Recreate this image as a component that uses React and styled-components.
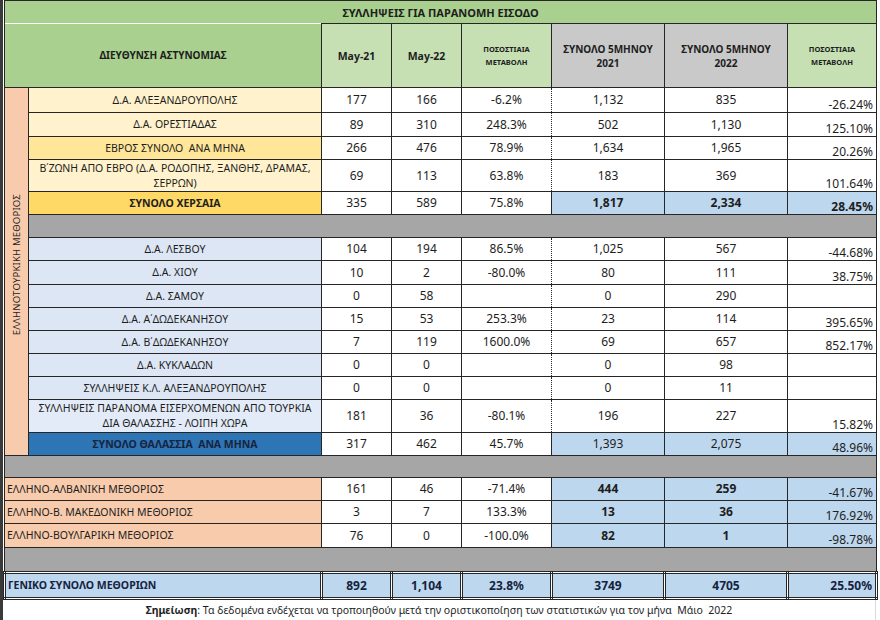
import React from "react";
import styled, { createGlobalStyle } from "styled-components";

const GlobalStyle = createGlobalStyle`
  html, body {
    margin: 0;
    background: #ffffff;
  }
  body {
    font-family: "Noto Sans", "Open Sans", sans-serif;
    color: #1e1e1e;
  }
`;

const Page = styled.div`
  width: 877px;
  height: 620px;
  border-left: 3px solid #3a3a3a;
  display: flex;
  flex-direction: column;
  overflow: hidden;
`;

const Sheet = styled.table`
  width: 872px;
  border-collapse: collapse;
  table-layout: fixed;
  & td {
    border: 1px solid #262626;
    padding: 0;
    overflow: hidden;
  }
`;

const Row = styled.tr`
  height: ${p => p.$h}px;
`;

const Title = styled.td`
  && {
    border-bottom: none;
  }
  background: #a9d08e;
  text-align: center;
  font-weight: 700;
  font-size: 11px;
`;

const Head = styled.td`
  background: ${p => p.$bg};
  text-align: center;
  font-weight: 700;
  font-size: ${p => p.$size || 10}px;
  line-height: ${p => p.$lh || 14}px;
  &&& {
    ${p => p.$open && "border-top: none;"}
  }
`;

const Side = styled.td`
  background: #f8cbad;
`;

const SideLabel = styled.div`
  writing-mode: vertical-rl;
  transform: rotate(180deg);
  margin: 0 auto;
  font-size: 9.5px;
  letter-spacing: 0.2px;
  white-space: nowrap;
  padding-top: 14px;
`;

const Name = styled.td`
  background: ${p => p.$bg};
  color: ${p => p.$color || "#1e1e1e"};
  text-align: ${p => (p.$left ? "left" : "center")};
  padding-left: ${p => (p.$left ? 2 : 0)}px !important;
  font-weight: ${p => (p.$bold ? 700 : 400)};
  font-size: 10.5px;
  line-height: 15px;
  white-space: pre-wrap;
`;

const Num = styled.td`
  background: ${p => (p.$blue ? "#bdd7ee" : "#ffffff")};
  text-align: center;
  font-size: 12px;
  font-weight: ${p => (p.$bold ? 700 : 400)};
  line-height: 14px;
  &&& {
    ${p => p.$dotRight && "border-right: 1px dotted #262626;"}
    ${p => p.$dotLeft && "border-left: 1px dotted #262626;"}
  }
`;

const Pct = styled.td`
  background: ${p => (p.$blue ? "#bdd7ee" : "#ffffff")};
  text-align: right;
  vertical-align: ${p => (p.$middle ? "middle" : "bottom")};
  padding-right: 3px !important;
  font-size: 12px;
  line-height: 14px;
  font-weight: ${p => (p.$bold ? 700 : 400)};
`;

const Spacer = styled.td`
  background: #a6a6a6;
`;

const GrandRow = styled.tr`
  height: 26px;
  & td {
    background: #bdd7ee;
    border: 3px double #262626;
    font-weight: 700;
    color: #15233f;
  }
`;

const Note = styled.div`
  height: 22px;
  display: flex;
  align-items: center;
  justify-content: center;
  font-size: 10.5px;
  color: #1e1e1e;
  border-right: 1px solid #d9d9d9;
  width: 872px;
  white-space: pre;
  & b {
    font-weight: 700;
  }
`;

function DataRow({ h, lead, name, bg, bold, color, left, span, v, blue, boldT, boldTp, dotted }) {
  return (
    <Row $h={h}>
      {lead}
      <Name $bg={bg} $bold={bold} $color={color} $left={left} colSpan={span || 1}>
        {name}
      </Name>
      <Num>{v[0]}</Num>
      <Num>{v[1]}</Num>
      <Num $dotRight={dotted}>{v[2]}</Num>
      <Num $dotLeft={dotted} $blue={blue} $bold={boldT}>{v[3]}</Num>
      <Num $blue={blue} $bold={boldT}>{v[4]}</Num>
      <Pct $blue={blue} $bold={boldTp}>{v[5]}</Pct>
    </Row>
  );
}

const LIGHT_Y = "#fff2cc";
const MID_Y = "#ffe699";
const GOLD = "#ffd966";
const SEA = "#dce6f4";
const SEA_TOTAL = "#2e75b6";
const PEACH = "#f8cbad";

const seaRows = [
  { name: "Δ.Α. ΛΕΣΒΟΥ", h: 23, v: ["104", "194", "86.5%", "1,025", "567", "-44.68%"] },
  { name: "Δ.Α. ΧΙΟΥ", h: 24, v: ["10", "2", "-80.0%", "80", "111", "38.75%"] },
  { name: "Δ.Α. ΣΑΜΟΥ", h: 23, v: ["0", "58", "", "0", "290", ""] },
  { name: "Δ.Α. Α΄ΔΩΔΕΚΑΝΗΣΟΥ", h: 23, v: ["15", "53", "253.3%", "23", "114", "395.65%"] },
  { name: "Δ.Α. Β΄ΔΩΔΕΚΑΝΗΣΟΥ", h: 23, v: ["7", "119", "1600.0%", "69", "657", "852.17%"] },
  { name: "Δ.Α. ΚΥΚΛΑΔΩΝ", h: 23, v: ["0", "0", "", "0", "98", ""] },
  { name: "ΣΥΛΛΗΨΕΙΣ Κ.Λ. ΑΛΕΞΑΝΔΡΟΥΠΟΛΗΣ", h: 23, v: ["0", "0", "", "0", "11", ""] },
];

const borderRows = [
  { name: "ΕΛΛΗΝΟ-ΑΛΒΑΝΙΚΗ ΜΕΘΟΡΙΟΣ", h: 23, v: ["161", "46", "-71.4%", "444", "259", "-41.67%"] },
  { name: "ΕΛΛΗΝΟ-Β. ΜΑΚΕΔΟΝΙΚΗ ΜΕΘΟΡΙΟΣ", h: 23, v: ["3", "7", "133.3%", "13", "36", "176.92%"] },
  { name: "ΕΛΛΗΝΟ-ΒΟΥΛΓΑΡΙΚΗ ΜΕΘΟΡΙΟΣ", h: 24, v: ["76", "0", "-100.0%", "82", "1", "-98.78%"] },
];

export default function App() {
  return (
    <>
      <GlobalStyle />
      <Page>
        <Sheet>
          <colgroup>
            <col style={{ width: 24 }} />
            <col style={{ width: 293 }} />
            <col style={{ width: 70 }} />
            <col style={{ width: 70 }} />
            <col style={{ width: 90 }} />
            <col style={{ width: 113 }} />
            <col style={{ width: 123 }} />
            <col style={{ width: 89 }} />
          </colgroup>
          <tbody>
            <Row $h={23}>
              <Title colSpan={8}>ΣΥΛΛΗΨΕΙΣ ΓΙΑ ΠΑΡΑΝΟΜΗ ΕΙΣΟΔΟ</Title>
            </Row>
            <Row $h={64}>
              <Head $bg="#a9d08e" colSpan={2} $open>ΔΙΕΥΘΥΝΣΗ ΑΣΤΥΝΟΜΙΑΣ</Head>
              <Head $bg="#c6e0b4" $size={10.5}>May-21</Head>
              <Head $bg="#c6e0b4" $size={10.5}>May-22</Head>
              <Head $bg="#c6e0b4" $size={7.5} $lh={13}>ΠΟΣΟΣΤΙΑΙΑ<br />ΜΕΤΑΒΟΛΗ</Head>
              <Head $bg="#c9c9c9">ΣΥΝΟΛΟ 5ΜΗΝΟΥ<br />2021</Head>
              <Head $bg="#c9c9c9">ΣΥΝΟΛΟ 5ΜΗΝΟΥ<br />2022</Head>
              <Head $bg="#c6e0b4" $size={7.5} $lh={13}>ΠΟΣΟΣΤΙΑΙΑ<br />ΜΕΤΑΒΟΛΗ</Head>
            </Row>

            <DataRow
              h={25}
              lead={
                <Side rowSpan={15}>
                  <SideLabel>ΕΛΛΗΝΟΤΟΥΡΚΙΚΗ ΜΕΘΟΡΙΟΣ</SideLabel>
                </Side>
              }
              name="Δ.Α. ΑΛΕΞΑΝΔΡΟΥΠΟΛΗΣ"
              bg={LIGHT_Y}
              dotted
              v={["177", "166", "-6.2%", "1,132", "835", "-26.24%"]}
            />
            <DataRow h={24} name="Δ.Α. ΟΡΕΣΤΙΑΔΑΣ" bg={LIGHT_Y} dotted
              v={["89", "310", "248.3%", "502", "1,130", "125.10%"]} />
            <DataRow h={23} name="ΕΒΡΟΣ ΣΥΝΟΛΟ  ΑΝΑ ΜΗΝΑ" bg={MID_Y} dotted
              v={["266", "476", "78.9%", "1,634", "1,965", "20.26%"]} />
            <DataRow h={32}
              name={<>Β΄ΖΩΝΗ ΑΠΟ ΕΒΡΟ (Δ.Α. ΡΟΔΟΠΗΣ, ΞΑΝΘΗΣ, ΔΡΑΜΑΣ,<br />ΣΕΡΡΩΝ)</>}
              bg={LIGHT_Y} dotted
              v={["69", "113", "63.8%", "183", "369", "101.64%"]} />
            <DataRow h={23} name="ΣΥΝΟΛΟ ΧΕΡΣΑΙΑ" bg={GOLD} bold blue boldT boldTp
              v={["335", "589", "75.8%", "1,817", "2,334", "28.45%"]} />

            <Row $h={23}>
              <Spacer colSpan={7} />
            </Row>

            {seaRows.map(r => (
              <DataRow key={r.name} h={r.h} name={r.name} bg={SEA} dotted v={r.v} />
            ))}
            <DataRow h={33}
              name={<>ΣΥΛΛΗΨΕΙΣ ΠΑΡΑΝΟΜΑ ΕΙΣΕΡΧΟΜΕΝΩΝ ΑΠΟ ΤΟΥΡΚΙΑ<br />ΔΙΑ ΘΑΛΑΣΣΗΣ - ΛΟΙΠΗ ΧΩΡΑ</>}
              bg="#e2ebf7" dotted
              v={["181", "36", "-80.1%", "196", "227", "15.82%"]} />
            <DataRow h={23} name="ΣΥΝΟΛΟ ΘΑΛΑΣΣΙΑ  ΑΝΑ ΜΗΝΑ" bg={SEA_TOTAL} color="#172440" bold blue
              v={["317", "462", "45.7%", "1,393", "2,075", "48.96%"]} />

            <Row $h={22}>
              <Spacer colSpan={8} />
            </Row>

            {borderRows.map(r => (
              <DataRow key={r.name} h={r.h} name={r.name} bg={PEACH} left span={2} blue boldT v={r.v} />
            ))}

            <Row $h={25}>
              <Spacer colSpan={8} />
            </Row>

            <GrandRow>
              <Name $bg="#bdd7ee" $left $bold colSpan={2}>ΓΕΝΙΚΟ ΣΥΝΟΛΟ ΜΕΘΟΡΙΩΝ</Name>
              <Num>892</Num>
              <Num>1,104</Num>
              <Num>23.8%</Num>
              <Num>3749</Num>
              <Num>4705</Num>
              <Pct $middle>25.50%</Pct>
            </GrandRow>
          </tbody>
        </Sheet>
        <Note>
          <b>Σημείωση</b>: Τα δεδομένα ενδέχεται να τροποιηθούν μετά την οριστικοποίηση των στατιστικών για τον μήνα  Μάιο  2022
        </Note>
      </Page>
    </>
  );
}
